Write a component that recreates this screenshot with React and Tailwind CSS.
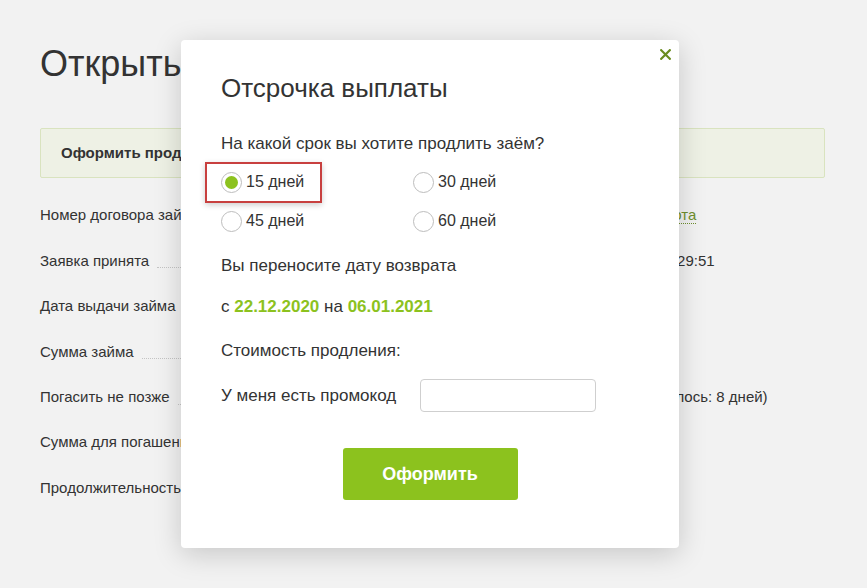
import { useState } from 'react'

const rows = [
  { label: 'Номер договора займа', value: '№ 452189 льгота', link: true },
  { label: 'Заявка принята', value: '21.12.2020 17:29:51' },
  { label: 'Дата выдачи займа', value: '21.12.2020' },
  { label: 'Сумма займа', value: '5 000 ₽' },
  { label: 'Погасить не позже', value: '22.12.20 (осталось: 8 дней)' },
  { label: 'Сумма для погашения', value: '6 500 ₽' },
  { label: 'Продолжительность займа', value: '15 дней' },
]

const terms = ['15 дней', '30 дней', '45 дней', '60 дней']

function Radio({ checked, label, onClick }) {
  return (
    <button type="button" onClick={onClick} className="flex items-center h-6 text-left">
      <span className="w-[21px] h-[21px] rounded-full border border-[#bdbdbd] bg-white flex items-center justify-center">
        {checked && <span className="w-[13px] h-[13px] rounded-full bg-[#8cc21e]" />}
      </span>
      <span className="ml-[4px] text-[16px] text-[#333]">{label}</span>
    </button>
  )
}

export default function App() {
  const [term, setTerm] = useState('15 дней')
  const [promo, setPromo] = useState('')

  return (
    <div className="relative w-full h-[588px] bg-[#f2f2f2] overflow-hidden font-['Liberation_Sans',Arial,sans-serif] text-[#333]">
      <div className="pl-10 pr-[42px]">
        <h1 className="pt-[42px] text-[36px] leading-[43px] font-normal text-[#333]">Открыть продление займа</h1>
        <div className="mt-[43px] h-[50px] bg-[#eef1e5] border border-[#d9e3bf] rounded-[2px] flex items-center pl-5">
          <span className="text-[15px] font-bold text-[#333]">Оформить продление займа</span>
        </div>
        <div className="mt-[15px]">
          {rows.map(r => (
            <div key={r.label} className="h-[45.4px] flex items-center text-[15px]">
              <div className="w-[537px] flex items-end">
                <span className="whitespace-nowrap">{r.label}</span>
                <span className="flex-1 mx-2 mb-[4px] border-b border-dotted border-[#c4c4c4]" />
              </div>
              <span className={r.link ? 'text-[#6f8f2e] border-b border-dotted border-[#6f8f2e] leading-[16px]' : ''}>{r.value}</span>
            </div>
          ))}
        </div>
      </div>

      <div className="absolute left-[181px] top-[40px] w-[498px] h-[508px] bg-white rounded-[4px] shadow-[0_6px_28px_rgba(0,0,0,0.18)] pl-10 pr-10">
        <button type="button" className="absolute right-[8px] top-[9px] w-[11px] h-[11px]" aria-label="close">
          <svg width="11" height="11" viewBox="0 0 11 11">
            <path d="M1.2 1.2 L9.8 9.8 M9.8 1.2 L1.2 9.8" stroke="#6a8c1f" strokeWidth="2.2" strokeLinecap="square" />
          </svg>
        </button>
        <h2 className="mt-[32px] text-[26px] leading-[32px] font-normal text-[#333]">Отсрочка выплаты</h2>
        <p className="mt-[28px] text-[17px] leading-6">На какой срок вы хотите продлить заём?</p>
        <div className="relative mt-[14px] grid grid-cols-[192px_192px] gap-y-[15px]">
          {terms.map(t => (
            <Radio key={t} label={t} checked={term === t} onClick={() => setTerm(t)} />
          ))}
          <div className="absolute left-[-16px] top-[-8px] w-[117px] h-[41px] border-2 border-[#c8403f] shadow-[0_2px_6px_rgba(0,0,0,0.2)] pointer-events-none" />
        </div>
        <p className="mt-[21px] text-[17px] leading-6">Вы переносите дату возврата</p>
        <p className="mt-[17px] text-[17px] leading-6">
          с <b className="text-[#8cc21e]">22.12.2020</b> на <b className="text-[#8cc21e]">06.01.2021</b>
        </p>
        <p className="mt-[20px] text-[17px] leading-6">Стоимость продления:</p>
        <div className="mt-[16px] flex items-center h-[33px]">
          <span className="w-[199px] text-[17px]">У меня есть промокод</span>
          <input
            value={promo}
            onChange={e => setPromo(e.target.value)}
            className="w-[176px] h-[33px] border border-[#cfcfcf] rounded-[4px] px-2 text-[15px] outline-none"
          />
        </div>
        <div className="mt-[36px] flex justify-center -ml-10 -mr-10">
          <button type="button" className="w-[175px] h-[52px] bg-[#8cc21e] rounded-[3px] text-white text-[18px] font-bold">Оформить</button>
        </div>
      </div>
    </div>
  )
}
